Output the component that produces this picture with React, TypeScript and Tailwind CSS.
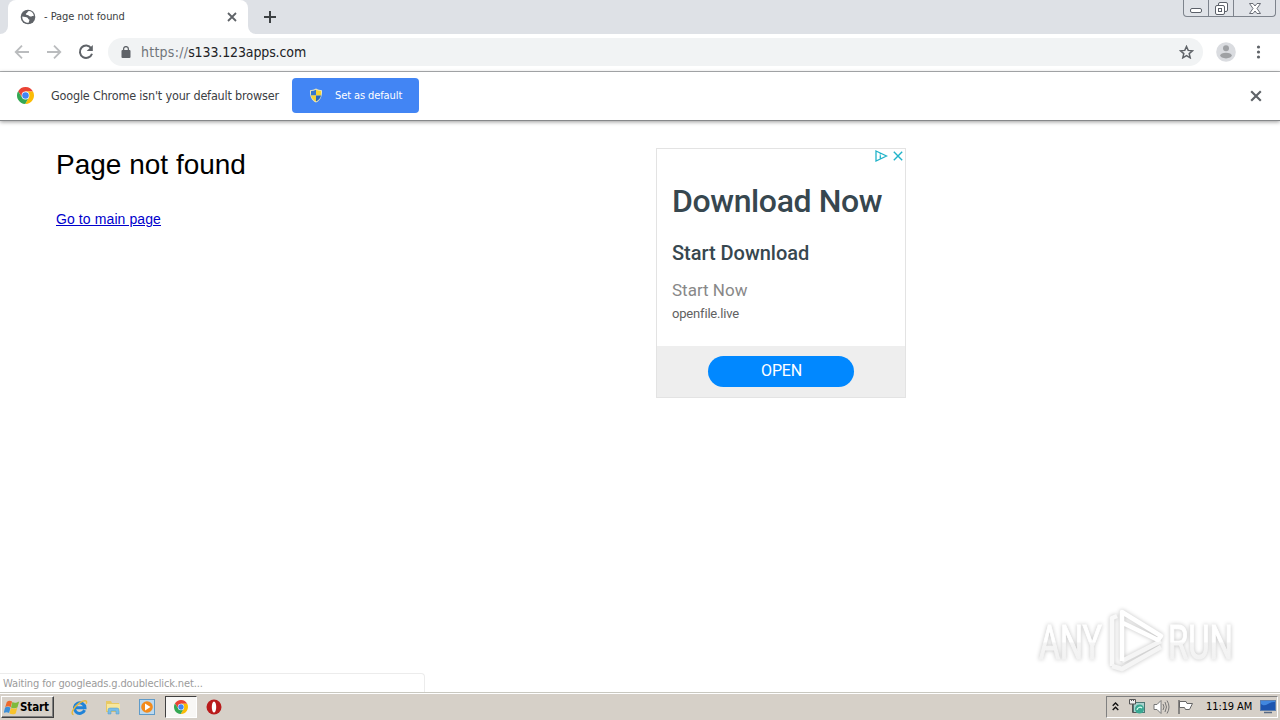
import type { ReactNode } from "react";

const tahoma = "font-['DejaVu_Sans_Condensed','Noto_Sans',sans-serif] whitespace-nowrap";

function ChromeLogo({ size }: { size: number }) {
    return (
        <svg width={size} height={size} viewBox="0 0 48 48">
            <path d="M24 13 H45.3 A24 24 0 0 0 3.2 12 L14.5 29.5 Z" fill="#ea4335" />
            <path d="M33.5 29.5 L23 48 A24 24 0 0 0 45.3 13 H24 Z" fill="#fbbc05" />
            <path d="M14.5 29.5 L3.2 12 A24 24 0 0 0 23 48 L33.5 29.5 Z" fill="#34a853" />
            <circle cx="24" cy="24" r="11" fill="#fff" />
            <circle cx="24" cy="24" r="9.2" fill="#4285f4" />
        </svg>
    );
}

function CloseIcon({ size, color }: { size: number; color: string }) {
    return (
        <svg width={size} height={size} viewBox="0 0 10 10">
            <path d="M1 1 L9 9 M9 1 L1 9" stroke={color} strokeWidth="1.8" />
        </svg>
    );
}

function TabStrip() {
    return (
        <div className="flex h-[34px] justify-between bg-[#dee1e6]">
            <div className="flex">
                <div className="flex w-2 items-end bg-white">
                    <div className="h-full w-full rounded-br-lg bg-[#dee1e6]" />
                </div>
                <div className="bg-[#dee1e6]">
                    <div className="flex h-[34px] w-[240px] items-center rounded-t-lg bg-white pl-[12px] pr-[11px]">
                        <svg width="16" height="16" viewBox="0 0 16 16">
                            <circle cx="8" cy="8" r="7.3" fill="#5f6368" />
                            <path d="M9.2 2 C7.4 2.2 7.6 3.7 6.4 4.2 C5.2 4.7 5.8 6 7.2 6 C8.9 6 9 7.4 10.4 7.6 C12 7.8 12.3 6.7 13.8 7.2 C13.8 4.5 12 2.4 9.2 2 Z M2.3 7.5 L6.5 8.2 C8.5 8.7 7.6 10.3 9.5 10.8 L8.6 13.8 C4.7 14 2 11 2.3 7.5 Z" fill="#fff" />
                        </svg>
                        <span className={`${tahoma} ml-[8px] flex-1 pt-px text-[11px] tracking-[-0.04px] text-[#3c4043]`}>- Page not found</span>
                        <CloseIcon size={10} color="#5f6368" />
                    </div>
                </div>
                <div className="w-2 bg-white">
                    <div className="h-full w-full rounded-bl-lg bg-[#dee1e6]" />
                </div>
                <div className="flex w-7 items-center justify-center">
                    <svg width="12" height="12" viewBox="0 0 12 12">
                        <path d="M6 0 V12 M0 6 H12" stroke="#3c4043" strokeWidth="2" />
                    </svg>
                </div>
            </div>
            <div className="mr-[4px] flex h-[17px] w-[93px] divide-x divide-[#7d838c] rounded-b-[4px] border border-t-0 border-[#7d838c] bg-[#e0e3e8]">
                <div className="flex w-[25px] justify-center pt-[8px]">
                    <svg width="12" height="5" viewBox="0 0 12 5">
                        <rect x=".5" y=".5" width="11" height="4" rx="1.5" fill="#fff" stroke="#5b6069" />
                    </svg>
                </div>
                <div className="flex w-[25px] justify-center pt-[2px]">
                    <svg width="13" height="13" viewBox="0 0 13 13" fill="#fff" stroke="#5b6069">
                        <rect x="3.5" y=".5" width="9" height="9" rx="1.5" />
                        <rect x=".5" y="3.5" width="9" height="9" rx="1.5" />
                        <rect x="3.5" y="6.5" width="3" height="3" />
                    </svg>
                </div>
                <div className="flex flex-1 justify-center pt-[3px]">
                    <svg width="12" height="11" viewBox="0 0 12 11">
                        <path d="M.5 .5 H4 L6 3 L8 .5 H11.5 L8 5.5 L11.5 10.5 H8 L6 8 L4 10.5 H.5 L4 5.5 Z" fill="#fff" stroke="#5b6069" strokeWidth=".9" />
                    </svg>
                </div>
            </div>
        </div>
    );
}

function Toolbar() {
    return (
        <div className="flex h-[38px] items-center border-b border-[#b1b3b5] bg-white pb-px pl-[14px]">
            <svg width="16" height="16" viewBox="0 0 16 16" fill="none" stroke="#babcbe" strokeWidth="1.8">
                <path d="M15 8 H2 M8 1.7 L1.7 8 L8 14.3" />
            </svg>
            <svg className="ml-[16px]" width="16" height="16" viewBox="0 0 16 16" fill="none" stroke="#babcbe" strokeWidth="1.8">
                <path d="M1 8 H14 M8 1.7 L14.3 8 L8 14.3" />
            </svg>
            <svg className="ml-[16px]" width="16" height="16" viewBox="0 0 16 16">
                <path d="M13.2 4.2 A6.2 6.2 0 1 0 14 9.7" fill="none" stroke="#5f6368" strokeWidth="2" />
                <path d="M14.8 .9 V7 H8.7 Z" fill="#5f6368" />
            </svg>
            <div className="ml-[14px] flex h-[28px] w-[1095px] items-center rounded-full bg-[#f1f3f4] pl-[13px] pr-[9px]">
                <svg width="10" height="12" viewBox="0 0 10 12">
                    <rect x=".5" y="4" width="9" height="8" rx="1" fill="#5f6368" />
                    <path d="M2.6 4.5 V3 A2.4 2.4 0 0 1 7.4 3 V4.5" fill="none" stroke="#5f6368" strokeWidth="1.3" />
                </svg>
                <div className={`${tahoma} ml-[10px] flex-1 pt-px text-[14px] text-[#202124]`}>
                    <span className="tracking-[0.25px] text-[#70757a]">https://</span>
                    <span className="tracking-[-0.12px]">s133.123apps.com</span>
                </div>
                <svg width="15" height="14" viewBox="0 0 15 14">
                    <path d="M7.5 1.5 L9.2 5.4 L13.5 5.8 L10.2 8.6 L11.2 12.8 L7.5 10.6 L3.8 12.8 L4.8 8.6 L1.5 5.8 L5.8 5.4 Z" fill="none" stroke="#5f6368" strokeWidth="1.5" />
                </svg>
            </div>
            <svg className="ml-[13px]" width="20" height="20" viewBox="0 0 20 20">
                <circle cx="10" cy="10" r="9.8" fill="#dadce0" />
                <circle cx="10" cy="6.3" r="3" fill="#9fa1a4" />
                <ellipse cx="10" cy="13.6" rx="5.8" ry="2.8" fill="#9fa1a4" />
            </svg>
            <svg className="ml-[20px]" width="5" height="14" viewBox="0 0 5 14" fill="#5f6368">
                <circle cx="2.5" cy="2" r="1.6" />
                <circle cx="2.5" cy="7" r="1.6" />
                <circle cx="2.5" cy="12" r="1.6" />
            </svg>
        </div>
    );
}

function InfoBar() {
    return (
        <div className="relative flex h-[49px] items-center border-b border-[#86888a] bg-white pb-px pl-[17px] pr-[18px] shadow-[0_1px_4px_rgba(0,0,0,0.4)]">
            <ChromeLogo size={17} />
            <span className={`${tahoma} ml-[17px] w-[241px] pt-[2px] text-[12.5px] tracking-[-0.18px] text-[#3c4043]`}>Google Chrome isn't your default browser</span>
            <button className="flex h-[35px] w-[127px] items-center rounded-[4px] bg-[#4285f4] pl-[17px] text-white">
                <svg width="14" height="15" viewBox="0 0 14 15">
                    <path d="M7 .5 C5 1.8 3 2.2 1 2.2 C.6 8 2.4 12.3 7 14.5 C11.6 12.3 13.4 8 13 2.2 C11 2.2 9 1.8 7 .5 Z" fill="#e9e5bd" />
                    <path d="M7 1.7 C5.4 2.6 3.7 3.1 2 3.1 L2 7.5 H7 Z" fill="#3577cf" />
                    <path d="M7 1.7 C8.6 2.6 10.3 3.1 12 3.1 L12 7.5 H7 Z" fill="#f5d335" />
                    <path d="M2 7.5 H7 V13.4 C4 12 2.4 10 2 7.5 Z" fill="#f5d335" />
                    <path d="M12 7.5 H7 V13.4 C10 12 11.6 10 12 7.5 Z" fill="#2868bd" />
                </svg>
                <span className={`${tahoma} ml-[12px] pt-px text-[11px] tracking-[-0.1px]`}>Set as default</span>
            </button>
            <div className="flex-1" />
            <CloseIcon size={12} color="#5f6368" />
        </div>
    );
}

function AdCard() {
    return (
        <div className="relative flex h-[250px] w-[250px] flex-col border border-[#e3e3e3] bg-white font-[Roboto,sans-serif]">
            <div className="absolute right-[2px] top-px flex items-center gap-[5px]">
                <svg width="13" height="12" viewBox="0 0 13 12" fill="none" stroke="#21b3c9" strokeWidth="1.3">
                    <path d="M1 1 L11.5 6 L1 11 Z M5.3 5.2 V8.2 M5.3 3.6 V4.5" />
                </svg>
                <svg width="10" height="10" viewBox="0 0 10 10" stroke="#21b3c9" strokeWidth="1.4">
                    <path d="M.8 .8 L9.2 9.2 M9.2 .8 L.8 9.2" />
                </svg>
            </div>
            <div className="h-[197px] pl-[15px] pt-[33px] whitespace-nowrap">
                <h2 className="text-[32px] leading-[38px] font-medium tracking-[-0.38px] text-[#37474f]">Download Now</h2>
                <h3 className="mt-[21px] text-[20px] leading-6 font-medium tracking-[-0.03px] text-[#37474f]">Start Download</h3>
                <p className="mt-[15px] text-[17px] leading-5 text-[#888]">Start Now</p>
                <p className="mt-[6px] text-[13px] leading-4 tracking-[-0.18px] text-[#616161]">openfile.live</p>
            </div>
            <div className="flex flex-1 justify-center bg-[#eee] pt-[10px]">
                <button className="h-[31px] w-[146px] rounded-full bg-[#0188ff] pb-[2px] pl-px text-[16px] leading-none tracking-[-0.2px] text-white">OPEN</button>
            </div>
        </div>
    );
}

function Watermark() {
    return (
        <svg className="absolute left-[1030px] top-[484px] drop-shadow-[0_0_2px_rgba(0,0,0,0.24)]" width="250" height="74" viewBox="0 0 250 74">
            <defs>
                <linearGradient id="fade" gradientUnits="userSpaceOnUse" x1="0" y1="14" x2="0" y2="60">
                    <stop offset="0.5" stopColor="#fff" />
                    <stop offset="0.52" stopColor="#f5f5f5" />
                    <stop offset="1" stopColor="#f1f1f1" />
                </linearGradient>
            </defs>
            <g fill="none" stroke="#fff" strokeWidth="4.5" strokeLinejoin="round">
                <path d="M82 61 V13 L87 11" stroke="#f9f9f9" />
                <path d="M82 61 L92 64 L131 42" stroke="#f5f5f5" />
                <path d="M92 56 L131 36" stroke="#f5f5f5" />
                <path d="M92 56 V7 L131 31 L128 35 L93 18" />
            </g>
            <g fill="url(#fade)" stroke="url(#fade)" strokeWidth="1" className="font-[Roboto,sans-serif]" fontSize="48">
                <text x="9" y="54" textLength="63" lengthAdjust="spacingAndGlyphs">ANY</text>
                <text x="138" y="54" textLength="65" lengthAdjust="spacingAndGlyphs">RUN</text>
            </g>
        </svg>
    );
}

function TaskbarSlot({ active, children }: { active?: boolean; children: ReactNode }) {
    return (
        <div
            className={`flex h-[22px] w-[32px] items-center justify-center border ${
                active ? "border-[#404040] border-b-white border-r-white bg-[#f8f7f5]" : "border-transparent"
            }`}
        >
            {children}
        </div>
    );
}

function Taskbar() {
    return (
        <div className="relative flex h-[28px] items-start justify-between border-t border-[#c9c8c0] bg-[#d6d0c8] shadow-[inset_0_1px_0_#fff]">
            <div className="flex gap-[1.7px] pt-[3px]">
                <button className="mr-[8px] ml-px flex h-[22px] w-[53px] items-center border border-b-[#404040] border-l-white border-r-[#404040] border-t-white bg-[#d6d0c8] pl-[2px] shadow-[inset_-1px_-1px_0_#808080]">
                    <svg width="16" height="15" viewBox="0 0 16 15">
                        <path d="M2.8 2 C4.5 .4 6.2 .4 8.1 1.5 L6.7 7.2 C5 6 3.2 6 1.2 7.2 Z" fill="#ee6a2c" />
                        <path d="M8.4 1.9 C10.2 3 12 3 15.2 1.4 L13.4 7.6 C11 8.6 9 8.5 7 7.4 Z" fill="#7fba3b" />
                        <path d="M1.1 7.6 C3 6.5 4.8 6.6 6.5 7.7 L5.1 13 C3.4 11.9 1.8 11.9 -.3 13 Z" fill="#3c8fd8" />
                        <path d="M6.9 8 C9 9.1 10.8 9.1 13.2 8 L11.7 13.4 C9.6 14.6 7.6 14.4 5.4 13.4 Z" fill="#f8c32b" />
                    </svg>
                    <span className={`${tahoma} pt-px text-[11.5px] font-bold tracking-[-0.1px] text-black`}>Start</span>
                </button>
                <TaskbarSlot>
                    <svg width="17" height="17" viewBox="0 0 17 17">
                        <path d="M13.6 11.2 A5.3 5.3 0 1 1 14 8.8 H5" fill="none" stroke="#2083d8" strokeWidth="3" />
                        <path d="M2.6 15.5 C-1 15.5 2.6 8 8 4.3 C12.5 1.2 17 .6 15.2 4.8" fill="none" stroke="#e8b93d" strokeWidth="1.5" />
                    </svg>
                </TaskbarSlot>
                <TaskbarSlot>
                    <svg width="16" height="16" viewBox="0 0 16 16">
                        <path d="M1 2 H6 L7 4 H14 V13 H1 Z" fill="#e8c964" />
                        <path d="M2 5 H15 V12 H2 Z" fill="#f8e79c" />
                        <path d="M3 15 V11 Q3 9 5 9 H12 Q14 9 14 11 V15 H11 V12 H6 V15 Z" fill="#79bde8" stroke="#5299c6" strokeWidth=".5" />
                    </svg>
                </TaskbarSlot>
                <TaskbarSlot>
                    <svg width="16" height="16" viewBox="0 0 16 16">
                        <rect x=".5" y=".5" width="15" height="15" fill="#bcd9ef" stroke="#5f9bc9" />
                        <circle cx="8" cy="8" r="5.8" fill="#f38b1c" />
                        <path d="M6 4.5 L11.5 8 L6 11.5 Z" fill="#fff" />
                    </svg>
                </TaskbarSlot>
                <TaskbarSlot active>
                    <ChromeLogo size={14} />
                </TaskbarSlot>
                <TaskbarSlot>
                    <svg width="16" height="16" viewBox="0 0 16 16">
                        <circle cx="8" cy="8" r="7.5" fill="#b91b1b" />
                        <ellipse cx="8" cy="8" rx="2.2" ry="5.5" fill="#fff" />
                    </svg>
                </TaskbarSlot>
            </div>
            <div className="mt-[3px] mr-[2px] flex h-[22px] w-[172px] items-center border border-b-white border-l-[#808080] border-r-white border-t-[#808080] pl-[5px]">
                <svg className="mb-[2px]" width="7" height="9" viewBox="0 0 7 9" fill="none" stroke="#111" strokeWidth="1.4">
                    <path d="M.7 3.8 L3.5 1 L6.3 3.8 M.7 8 L3.5 5.2 L6.3 8" />
                </svg>
                <svg className="ml-[10px]" width="17" height="16" viewBox="0 0 17 16">
                    <rect x="4.5" y="3.5" width="11" height="10" fill="#a9d4cf" stroke="#4c7774" />
                    <circle cx="10.5" cy="10" r="4.5" fill="#3aa892" />
                    <path d="M8 11 A3 3 0 0 1 13 9" fill="none" stroke="#d8fff2" strokeWidth="1.2" />
                    <path d="M.5 .5 H6.5 V5 H.5 Z" fill="#eee" stroke="#555" />
                    <path d="M2.5 0 V2 M4.5 0 V2 M3.5 5 V13.5 H7" fill="none" stroke="#555" />
                </svg>
                <svg className="ml-[7px]" width="17" height="16" viewBox="0 0 17 16" stroke="#777">
                    <path d="M1 5.5 H4 L8 1.5 V14.5 L4 10.5 H1 Z" fill="#fff" />
                    <path d="M10 5 Q12 8 10 11 M12 3 Q15 8 12 13 M14 1.5 Q18 8 14 14.5" fill="none" />
                </svg>
                <svg className="ml-[7px]" width="17" height="16" viewBox="0 0 17 16" stroke="#666">
                    <path d="M2.5 2.5 H9 L10 4.5 H15.5 L12.5 10.5 H8.5 L7.5 8.5 H2.5 Z" fill="#fff" />
                    <path d="M2 1 V15" strokeWidth="1.4" />
                </svg>
                <span className={`${tahoma} ml-[12px] w-[54px] pt-px text-[11px] tracking-[-0.1px] text-black`}>11:19 AM</span>
                <svg width="16" height="14" viewBox="0 0 16 14">
                    <rect x=".5" y=".5" width="15" height="10" fill="#1d55b0" stroke="#5e7fae" />
                    <path d="M1 10 V4 C6 8 9 1 15 2 V1 H1 Z" fill="#4187df" />
                    <path d="M4 12.5 H12" stroke="#596b84" strokeWidth="1.5" />
                </svg>
            </div>
        </div>
    );
}

export default function App() {
    return (
        <div className="flex h-[720px] w-[1280px] flex-col overflow-hidden bg-white">
            <TabStrip />
            <Toolbar />
            <InfoBar />
            <main className="relative flex flex-1 flex-col justify-between font-['Liberation_Sans',Arial,sans-serif] text-black">
                <div className="flex pl-[56px] pt-[27px]">
                    <div className="w-[600px] pt-px">
                        <h1 className="text-[28px] leading-8">Page not found</h1>
                        <a href="#" className="mt-[29px] block text-[14px] leading-[18px] tracking-[0.1px] text-[#0000cc] underline">Go to main page</a>
                    </div>
                    <AdCard />
                </div>
                <Watermark />
                <div className={`${tahoma} h-[19px] w-[425px] rounded-tr-[4px] border-r border-t border-[#ececec] pl-[3px] text-[11px] leading-[19px] tracking-[-0.13px] text-[#9b9b9b]`}>
                    Waiting for googleads.g.doubleclick.net...
                </div>
            </main>
            <Taskbar />
        </div>
    );
}
